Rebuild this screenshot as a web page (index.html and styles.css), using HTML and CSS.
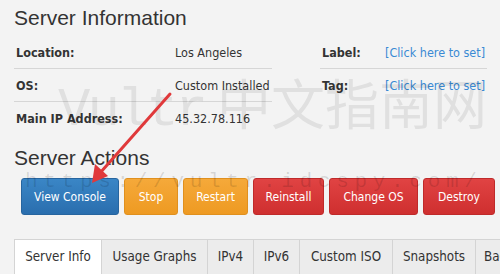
FILE: index.html
```html
<!DOCTYPE html>
<html>
<head>
<meta charset="utf-8">
<link rel="stylesheet" href="styles.css">
</head>
<body>
<div class="page">
  <h2 class="title">Server Information</h2>
  <div class="info">
    <div class="table left">
      <div class="row"><span class="lbl">Location:</span><span class="val">Los Angeles</span></div>
      <div class="row"><span class="lbl">OS:</span><span class="val">Custom Installed</span></div>
      <div class="row last"><span class="lbl">Main IP Address:</span><span class="val">45.32.78.116</span></div>
    </div>
    <div class="table right">
      <div class="row"><span class="lbl">Label:</span><a class="val link">[Click here to set]</a></div>
      <div class="row last"><span class="lbl">Tag:</span><a class="val link">[Click here to set]</a></div>
    </div>
  </div>
  <h2 class="title actions-title">Server Actions</h2>
  <div class="buttons">
    <span class="btn blue">View Console</span>
    <span class="btn orange">Stop</span>
    <span class="btn orange">Restart</span>
    <span class="btn red">Reinstall</span>
    <span class="btn red">Change OS</span>
    <span class="btn red">Destroy</span>
  </div>
  <div class="tabs">
    <span class="tab active">Server Info</span>
    <span class="tab">Usage Graphs</span>
    <span class="tab">IPv4</span>
    <span class="tab">IPv6</span>
    <span class="tab">Custom ISO</span>
    <span class="tab">Snapshots</span>
    <span class="tab">Backups</span>
  </div>
</div>
<div class="wm wm1"><span class="wm-latin">Vultr</span><span class="wm-cjk">中文指南网</span></div>
<div class="wm wm2">https://vultr.idcspy.com/</div>
<svg class="arrow" width="500" height="274" viewBox="0 0 500 274">
  <line x1="170" y1="94" x2="100" y2="173" stroke="#e0393b" stroke-width="3" stroke-linecap="round"/>
  <polygon points="92,183 95,164 108,176" fill="#e0393b"/>
</svg>
</body>
</html>
```
FILE: styles.css
```css
html, body {
  margin: 0;
  padding: 0;
  background: #f3f3f3;
  width: 500px;
  height: 274px;
  overflow: hidden;
  position: relative;
}
.page {
  padding: 5px 0 0 14px;
  font-family: "DejaVu Sans Condensed", "DejaVu Sans", sans-serif;
  font-size: 12.5px;
  color: #333;
}
.title {
  margin: 0;
  font-family: "Liberation Sans", Arial, sans-serif;
  font-weight: normal;
  font-size: 21px;
  line-height: 26px;
  color: #333;
}
.info {
  display: flex;
  gap: 48px;
  margin-top: 5px;
}
.table.left { width: 258px; }
.table.right { width: 167px; }
.row {
  display: flex;
  align-items: center;
  height: 31px;
  padding-top: 1px;
  border-bottom: 1px solid #d6d6d6;
}
.row.last { border-bottom: none; }
.lbl {
  font-weight: bold;
  color: #333;
  padding-left: 2px;
}
.left .lbl { width: 159px; }
.right .lbl { width: 63px; }
.link { color: #3a8ad4; }
.actions-title { margin-top: 11px; }
.buttons {
  display: flex;
  gap: 5px;
  margin: 7px 0 0 7px;
}
.btn {
  display: flex;
  align-items: center;
  justify-content: center;
  box-sizing: border-box;
  height: 37px;
  white-space: nowrap;
  border-radius: 3px;
  color: #fff;
  font-size: 12px;
  border: 1px solid;
}
.blue { background: linear-gradient(#3a86c6, #2a6eae); border-color: #27659f; }
.orange { background: linear-gradient(#f5a93a, #ee9a22); border-color: #e0901e; }
.red { background: linear-gradient(#e04343, #cf2f2f); border-color: #bf2a2a; }
.buttons .btn:nth-child(1) { width: 98px; }
.buttons .btn:nth-child(2) { width: 54px; }
.buttons .btn:nth-child(3) { width: 65px; }
.buttons .btn:nth-child(4) { width: 71px; }
.buttons .btn:nth-child(5) { width: 89px; }
.buttons .btn:nth-child(6) { width: 72px; }
.tabs {
  display: flex;
  margin-top: 24px;
}
.tab {
  flex: none;
  height: 38px;
  display: flex;
  align-items: center;
  justify-content: center;
  box-sizing: border-box;
  padding-bottom: 3px;
  background: #ececec;
  border: 1px solid #d4d4d4;
  border-left: 0;
  font-size: 13.3px;
  color: #333;
  white-space: nowrap;
}
.tab:first-child { border-left: 1px solid #d4d4d4; }
.tab.active { background: #fff; border-bottom-color: #fff; }
.tabs .tab:nth-child(1) { width: 88px; }
.tabs .tab:nth-child(2) { width: 106px; }
.tabs .tab:nth-child(3) { width: 46px; }
.tabs .tab:nth-child(4) { width: 46px; }
.tabs .tab:nth-child(5) { width: 93px; }
.tabs .tab:nth-child(6) { width: 83px; }
.tabs .tab:nth-child(7) { width: 80px; justify-content: flex-start; padding-left: 8px; }
.wm {
  position: absolute;
  pointer-events: none;
  white-space: nowrap;
}
.wm1 {
  left: 58px;
  top: 75px;
  line-height: 54px;
  font-size: 54px;
  color: rgba(0, 0, 0, 0.08);
}
.wm-latin {
  font-family: "Liberation Mono", monospace;
  letter-spacing: -3px;
}
.wm-cjk {
  font-family: "Noto Sans CJK SC", sans-serif;
  margin-left: 12px;
  letter-spacing: 0;
}
.wm2 {
  left: 25px;
  top: 171px;
  line-height: 22px;
  font-family: "Liberation Mono", monospace;
  font-size: 21px;
  letter-spacing: 5.7px;
  color: rgba(0, 0, 0, 0.12);
}
.arrow {
  position: absolute;
  left: 0;
  top: 0;
}
```
